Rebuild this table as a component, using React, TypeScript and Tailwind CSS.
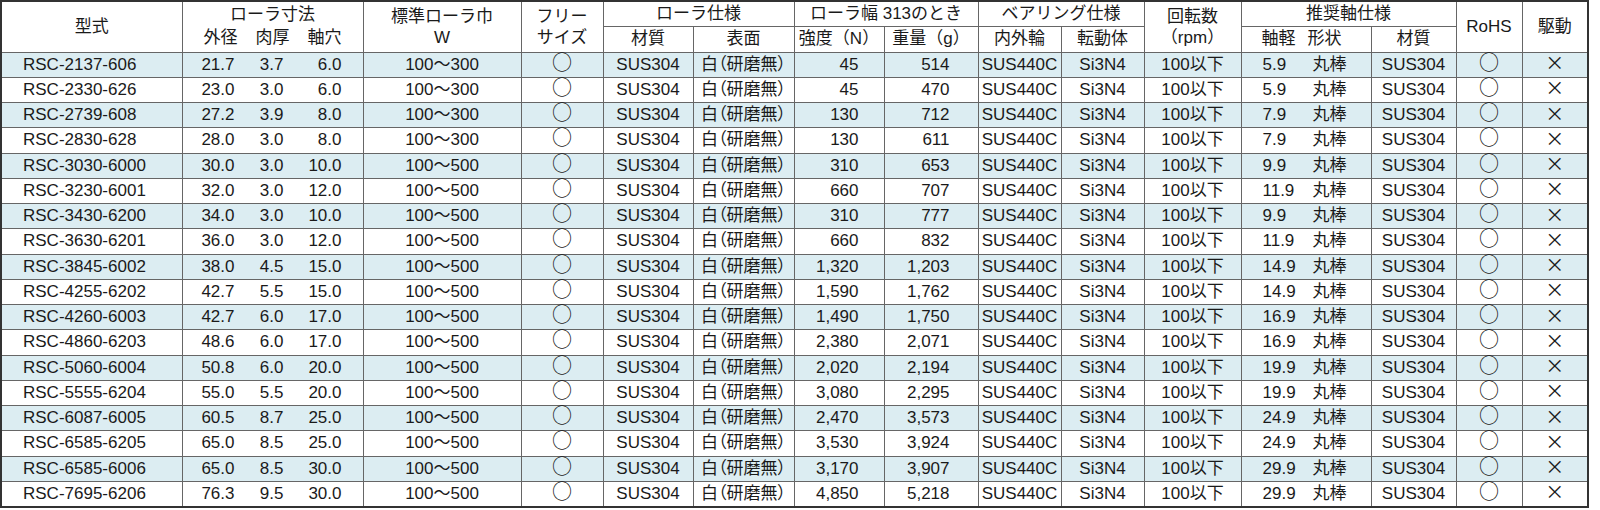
import React from "react";

type Row = [string, string, string, string, string, string, string, string];

// model, od, wall, bore, width range, strength, weight, shaft dia
const ROWS: Row[] = [
  ["RSC-2137-606", "21.7", "3.7", "6.0", "100〜300", "45", "514", "5.9"],
  ["RSC-2330-626", "23.0", "3.0", "6.0", "100〜300", "45", "470", "5.9"],
  ["RSC-2739-608", "27.2", "3.9", "8.0", "100〜300", "130", "712", "7.9"],
  ["RSC-2830-628", "28.0", "3.0", "8.0", "100〜300", "130", "611", "7.9"],
  ["RSC-3030-6000", "30.0", "3.0", "10.0", "100〜500", "310", "653", "9.9"],
  ["RSC-3230-6001", "32.0", "3.0", "12.0", "100〜500", "660", "707", "11.9"],
  ["RSC-3430-6200", "34.0", "3.0", "10.0", "100〜500", "310", "777", "9.9"],
  ["RSC-3630-6201", "36.0", "3.0", "12.0", "100〜500", "660", "832", "11.9"],
  ["RSC-3845-6002", "38.0", "4.5", "15.0", "100〜500", "1,320", "1,203", "14.9"],
  ["RSC-4255-6202", "42.7", "5.5", "15.0", "100〜500", "1,590", "1,762", "14.9"],
  ["RSC-4260-6003", "42.7", "6.0", "17.0", "100〜500", "1,490", "1,750", "16.9"],
  ["RSC-4860-6203", "48.6", "6.0", "17.0", "100〜500", "2,380", "2,071", "16.9"],
  ["RSC-5060-6004", "50.8", "6.0", "20.0", "100〜500", "2,020", "2,194", "19.9"],
  ["RSC-5555-6204", "55.0", "5.5", "20.0", "100〜500", "3,080", "2,295", "19.9"],
  ["RSC-6087-6005", "60.5", "8.7", "25.0", "100〜500", "2,470", "3,573", "24.9"],
  ["RSC-6585-6205", "65.0", "8.5", "25.0", "100〜500", "3,530", "3,924", "24.9"],
  ["RSC-6585-6006", "65.0", "8.5", "30.0", "100〜500", "3,170", "3,907", "29.9"],
  ["RSC-7695-6206", "76.3", "9.5", "30.0", "100〜500", "4,850", "5,218", "29.9"],
];

const COLS = [181, 181, 158, 82, 90, 101, 90, 94, 83, 83, 97, 130, 85, 66, 66];

const td = "border border-[#666] p-0 text-center align-middle whitespace-nowrap leading-[20px]";
const th = `${td} font-normal`;
const cjk = "font-['Noto_Sans_CJK_JP',sans-serif]";

function Mark({ ch, size }: { ch: string; size: string }) {
  return (
    <div className="flex items-center justify-center h-[20px]">
      <span className={`${cjk} ${size} leading-none relative -top-[3px]`}>{ch}</span>
    </div>
  );
}

export default function App() {
  return (
    <div className="bg-white w-[1600px] h-[510px] overflow-hidden font-['Liberation_Sans','Noto_Sans_CJK_JP',sans-serif] text-[17px] text-[#1a1a1a]">
      <table className="table-fixed border-collapse border-2 border-[#333] w-[1588px]">
        <colgroup>
          {COLS.map((w, i) => (
            <col key={i} style={{ width: w }} />
          ))}
        </colgroup>
        <thead>
          <tr className="h-[25.5px]">
            <th rowSpan={2} className={th}>型式</th>
            <th rowSpan={2} className={th}>
              <div className="leading-[22px]">ローラ寸法</div>
              <div className="leading-[24px] flex justify-center gap-[18px]">
                <span>外径</span>
                <span>肉厚</span>
                <span>軸穴</span>
              </div>
            </th>
            <th rowSpan={2} className={`${th} leading-[21px]`}>
              標準ローラ巾
              <br />W
            </th>
            <th rowSpan={2} className={`${th} leading-[21px]`}>
              フリー
              <br />
              サイズ
            </th>
            <th colSpan={2} className={th}>ローラ仕様</th>
            <th colSpan={2} className={th}>ローラ幅 313のとき</th>
            <th colSpan={2} className={th}>ベアリング仕様</th>
            <th rowSpan={2} className={`${th} leading-[21px]`}>
              回転数
              <br />
              （rpm）
            </th>
            <th colSpan={2} className={th}>推奨軸仕様</th>
            <th rowSpan={2} className={th}>RoHS</th>
            <th rowSpan={2} className={th}>駆動</th>
          </tr>
          <tr className="h-[25.5px]">
            <th className={th}>材質</th>
            <th className={th}>表面</th>
            <th className={th}>強度（N）</th>
            <th className={th}>重量（g）</th>
            <th className={th}>内外輪</th>
            <th className={th}>転動体</th>
            <th className={th}>
              <div className="flex justify-start gap-[12px] pl-[20px]">
                <span>軸軽</span>
                <span>形状</span>
              </div>
            </th>
            <th className={th}>材質</th>
          </tr>
        </thead>
        <tbody>
          {ROWS.map((r, i) => (
            <tr key={r[0]} className={i % 2 === 0 ? "h-[25.25px] bg-[#dcedf2]" : "h-[25.25px] bg-white"}>
              <td className={`${td} text-left pl-[21px]`}>{r[0]}</td>
              <td className={td}>
                <div className="flex">
                  <span className="w-[52px] text-right">{r[1]}</span>
                  <span className="w-[49px] text-right">{r[2]}</span>
                  <span className="w-[58px] text-right">{r[3]}</span>
                </div>
              </td>
              <td className={td}>{r[4]}</td>
              <td className={td}>
                <Mark ch="○" size="text-[20px]" />
              </td>
              <td className={td}>SUS304</td>
              <td className={`${td} [font-feature-settings:'palt']`}>白（研磨無）</td>
              <td className={`${td} text-right pr-[25px]`}>{r[5]}</td>
              <td className={`${td} text-right pr-[28px]`}>{r[6]}</td>
              <td className={td}>SUS440C</td>
              <td className={td}>Si3N4</td>
              <td className={td}>100以下</td>
              <td className={td}>
                <div className="flex pl-[21px]">
                  <span className="w-[50px] text-left">{r[7]}</span>
                  <span>丸棒</span>
                </div>
              </td>
              <td className={td}>SUS304</td>
              <td className={td}>
                <Mark ch="○" size="text-[20px]" />
              </td>
              <td className={td}>
                <Mark ch="×" size="text-[19px]" />
              </td>
            </tr>
          ))}
        </tbody>
      </table>
    </div>
  );
}
